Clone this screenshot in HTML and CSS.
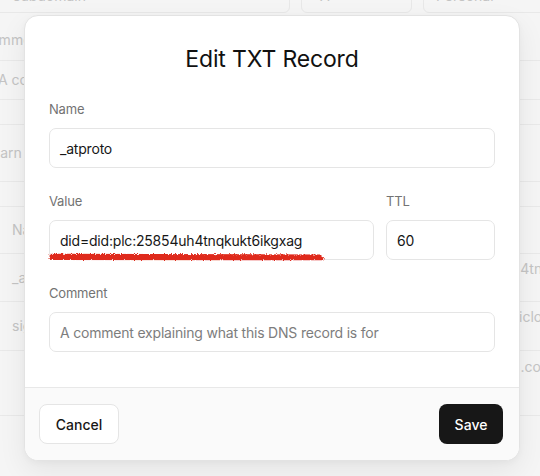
FILE: index.html
```html
<!DOCTYPE html>
<html lang="en">
<head>
<meta charset="utf-8">
<title>Edit TXT Record</title>
<link rel="stylesheet" href="styles.css">
</head>
<body>
<div class="page">
  <div class="bg-head">
    <div class="bg-box b1"><span>subdomain</span></div>
    <div class="bg-box b2"><span>A</span></div>
    <div class="bg-box b3"><span>Personal</span></div>
  </div>
  <div class="bg-row h46 bottom"><span class="bg-left cut-co">Comment</span></div>
  <div class="bg-row h39"><span class="bg-left cut-a">A comment explaining</span></div>
  <div class="bg-row h25"></div>
  <div class="bg-row h57"><span class="bg-left cut-le">Learn more</span></div>
  <div class="bg-row h25"></div>
  <div class="bg-row h47"><span class="bg-left">Name</span></div>
  <div class="bg-row h48"><span class="bg-left">_atproto</span><span class="bg-right r-4tr">h4tnqkukt</span></div>
  <div class="bg-row h49"><span class="bg-left">sig1</span><span class="bg-right r-iclo">icloud.com</span></div>
  <div class="bg-row h65"><span class="bg-right r-co">l.com</span></div>
</div>

<div class="modal" role="dialog" aria-labelledby="dlg-title">
  <div class="modal-body">
    <h2 class="title" id="dlg-title">Edit TXT Record</h2>
    <div class="fields">
      <div class="field">
        <label class="field-label">Name</label>
        <div class="input">_atproto</div>
      </div>
      <div class="field-row">
        <div class="field grow">
          <label class="field-label">Value</label>
          <div class="input-wrap">
            <div class="input">did=did:plc:25854uh4tnqkukt6ikgxag</div>
            <svg class="scribble" width="278" height="12" viewBox="0 0 278 12" aria-hidden="true">
              <defs>
                <filter id="rough" x="-5%" y="-60%" width="110%" height="220%">
                  <feTurbulence type="fractalNoise" baseFrequency="0.9" numOctaves="2" seed="4" result="n"/>
                  <feDisplacementMap in="SourceGraphic" in2="n" scale="3.5" xChannelSelector="R" yChannelSelector="G"/>
                </filter>
              </defs>
              <g filter="url(#rough)" stroke="#df2a1c" stroke-linecap="round" fill="none">
                <path d="M3 4.5 L272 5.2" stroke-width="3.4"/>
                <path d="M3 7.2 L274 7.6" stroke-width="3.4"/>
                <path d="M6 5.8 L268 6.2" stroke-width="2.8"/>
              </g>
            </svg>
          </div>
        </div>
        <div class="field ttl">
          <label class="field-label">TTL</label>
          <div class="input">60</div>
        </div>
      </div>
      <div class="field">
        <label class="field-label">Comment</label>
        <div class="input placeholder">A comment explaining what this DNS record is for</div>
      </div>
    </div>
  </div>
  <div class="modal-footer">
    <button class="btn btn-outline" type="button">Cancel</button>
    <button class="btn btn-dark" type="button">Save</button>
  </div>
</div>
</body>
</html>
```

FILE: styles.css
```css
html, body {
  margin: 0;
  padding: 0;
}

body {
  width: 540px;
  height: 476px;
  overflow: hidden;
  background: #f5f5f5;
  font-family: Inter, "Noto Sans", sans-serif;
  color: #171717;
}

/* faded page behind the dialog */
.page {
  width: 540px;
  height: 476px;
  overflow: hidden;
  color: #c4c4c4;
  font-size: 14px;
}

.bg-head {
  height: 15px;
  display: flex;
  gap: 11px;
  margin-left: -10px;
  overflow: hidden;
}

.bg-box {
  box-sizing: border-box;
  height: 34px;
  margin-top: -21px;
  border: 1px solid #e8e8e8;
  border-radius: 6px;
  display: flex;
  align-items: center;
  padding-left: 12px;
  line-height: 20px;
  flex-shrink: 0;
}

.b1 { width: 300px; padding-left: 22px; }
.b2 { width: 111px; padding-left: 18px; }
.b3 { width: 140px; }

.bg-row {
  position: relative;
  box-sizing: border-box;
  border-bottom: 1px solid #e9e9e9;
  display: flex;
  align-items: center;
  line-height: 20px;
  white-space: nowrap;
}

.bottom { align-items: flex-end; padding-bottom: 10px; }

.h25 { height: 25px; }
.h39 { height: 39px; }
.h46 { height: 46px; }
.h47 { height: 47px; }
.h48 { height: 48px; }
.h49 { height: 49px; }
.h57 { height: 57px; }
.h65 { height: 65px; }

.bg-left { margin-left: 12px; }
.cut-co { margin-left: -20px; }
.cut-a { margin-left: -2px; }
.cut-le { margin-left: -16px; }

.bg-right {
  position: absolute;
  top: 5px;
}
.r-4tr { left: 512px; }
.r-iclo { left: 519px; }
.r-co { left: 517px; top: 6px; }

/* dialog */
.modal {
  position: absolute;
  left: 24px;
  top: 15px;
  width: 496px;
  box-sizing: border-box;
  background: #fff;
  border: 1px solid #e3e3e3;
  border-radius: 14px;
  box-shadow: 0 10px 28px rgba(0, 0, 0, 0.07), 0 2px 6px rgba(0, 0, 0, 0.03);
  overflow: hidden;
}

.modal-body {
  padding: 27px 24px 35px;
}

.title {
  margin: 0 0 24px;
  font-size: 23px;
  line-height: 32px;
  font-weight: 400;
  letter-spacing: -0.15px;
  text-align: center;
  color: #111;
}

.fields {
  display: flex;
  flex-direction: column;
  gap: 23px;
}

.field-row {
  display: flex;
  gap: 12px;
}

.grow { flex: 1; }
.ttl { width: 109px; }

.field-label {
  display: block;
  font-size: 13px;
  line-height: 20px;
  letter-spacing: -0.2px;
  color: #737373;
  margin-bottom: 9px;
}

.input-wrap {
  position: relative;
}

.input {
  box-sizing: border-box;
  height: 40px;
  border: 1px solid #e5e5e5;
  border-radius: 7px;
  padding: 0 10px;
  display: flex;
  align-items: center;
  font-size: 14px;
  letter-spacing: -0.2px;
  color: #171717;
  white-space: nowrap;
  overflow: hidden;
}

.placeholder {
  color: #7d7d7d;
}

.scribble {
  position: absolute;
  left: -1px;
  top: 31px;
}

.modal-footer {
  border-top: 1px solid #e8e8e8;
  background: #fafafa;
  padding: 16px 16px 16px 14px;
  display: flex;
  justify-content: space-between;
  align-items: center;
}

.btn {
  box-sizing: border-box;
  height: 40px;
  border-radius: 8px;
  font-family: inherit;
  font-size: 14px;
  font-weight: 500;
  cursor: pointer;
}

.btn-outline {
  width: 80px;
  background: #fff;
  border: 1px solid #e5e5e5;
  color: #171717;
}

.btn-dark {
  width: 64px;
  background: #171717;
  border: none;
  color: #fff;
}
```
